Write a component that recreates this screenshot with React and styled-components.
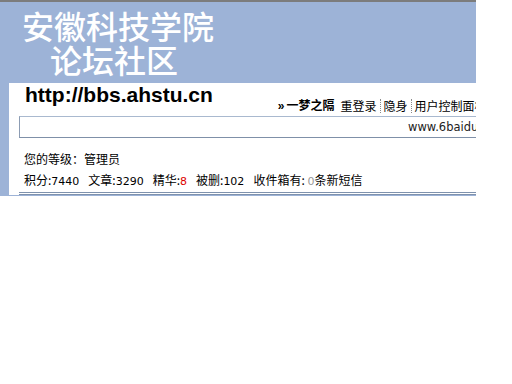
import React from "react";
import styled, { createGlobalStyle } from "styled-components";

const GlobalStyle = createGlobalStyle`
  body {
    margin: 0;
    background: #fff;
    font-family: "Liberation Sans", "Noto Sans CJK SC", sans-serif;
  }
`;

const Page = styled.div`
  width: 476px;
  overflow: hidden;
  border-top: 2px solid #7c7c7c;
`;

const Banner = styled.div`
  height: 81px;
  background: #9db3d7;
  padding: 6px 0 0 22px;
  box-sizing: border-box;
`;

const TitleLine = styled.div`
  font-family: "Noto Sans CJK SC", sans-serif;
  font-size: 32px;
  line-height: 34px;
  font-weight: 500;
  color: #fff;
  padding-left: ${(p) => p.$indent || 0}px;
  white-space: nowrap;
`;

const Main = styled.div`
  background: #9db3d7;
  padding-left: 9px;
  padding-bottom: 1px;
`;

const Panel = styled.div`
  width: 540px;
  background: #fff;
`;

const TopBar = styled.div`
  display: flex;
  align-items: flex-end;
  height: 33px;
  padding-left: 16px;
`;

const Logo = styled.div`
  font-size: 21px;
  font-weight: bold;
  color: #000;
  line-height: 24px;
  padding-bottom: 9px;
  white-space: nowrap;
`;

const Nav = styled.div`
  display: flex;
  align-items: center;
  margin-left: 62px;
  padding-bottom: 3px;
  font-family: "Noto Sans CJK SC", sans-serif;
  font-size: 12px;
  line-height: 14px;
  white-space: nowrap;
  color: #000;
`;

const NavItem = styled.span`
  font-weight: ${(p) => (p.$bold ? 700 : 400)};
  padding: 0 3px;
  border-left: ${(p) => (p.$sep ? "1px dotted #8a8a8a" : "none")};
`;

const Bullet = styled.span`
  font-family: "Liberation Sans", sans-serif;
  font-weight: bold;
  margin-right: 2px;
`;

const UrlBox = styled.div`
  margin-left: 10px;
  height: 20px;
  border-top: 1px solid #a9b9cf;
  border-bottom: 1px solid #7f90a8;
  border-left: 1px solid #8c9cb3;
  display: flex;
  align-items: center;
  padding-left: 388px;
  font-family: "DejaVu Sans", sans-serif;
  font-size: 11.5px;
  color: #222;
  white-space: nowrap;
`;

const Info = styled.div`
  margin-top: 10px;
  padding-left: 15px;
  font-family: "Noto Sans CJK SC", sans-serif;
  font-size: 12px;
  color: #000;
`;

const InfoLine = styled.div`
  line-height: 21px;
  white-space: nowrap;
`;

const Stat = styled.span`
  margin-right: 9px;
`;

const Num = styled.span`
  font-family: "DejaVu Sans", sans-serif;
  font-size: 11px;
  color: ${(p) => p.$color || "#000"};
`;

const Rule = styled.div`
  margin-left: 10px;
  border-bottom: 3px double #7f92ad;
`;

export default function App() {
  return (
    <>
      <GlobalStyle />
      <Page>
        <Banner>
          <TitleLine>安徽科技学院</TitleLine>
          <TitleLine $indent={28}>论坛社区</TitleLine>
        </Banner>
        <Main>
          <Panel>
            <TopBar>
              <Logo>http://bbs.ahstu.cn</Logo>
              <Nav>
                <NavItem $bold>
                  <Bullet>»</Bullet>一梦之隔
                </NavItem>
                <NavItem>重登录</NavItem>
                <NavItem $sep>隐身</NavItem>
                <NavItem $sep>用户控制面板</NavItem>
              </Nav>
            </TopBar>
            <UrlBox>www.6baidu.com</UrlBox>
            <Info>
              <InfoLine>您的等级：管理员</InfoLine>
              <InfoLine>
                <Stat>
                  积分:<Num>7440</Num>
                </Stat>
                <Stat>
                  文章:<Num>3290</Num>
                </Stat>
                <Stat>
                  精华:<Num $color="#d00">8</Num>
                </Stat>
                <Stat>
                  被删:<Num>102</Num>
                </Stat>
                <Stat>
                  收件箱有: <Num $color="#999">0</Num>条新短信
                </Stat>
              </InfoLine>
            </Info>
            <Rule />
          </Panel>
        </Main>
      </Page>
    </>
  );
}
